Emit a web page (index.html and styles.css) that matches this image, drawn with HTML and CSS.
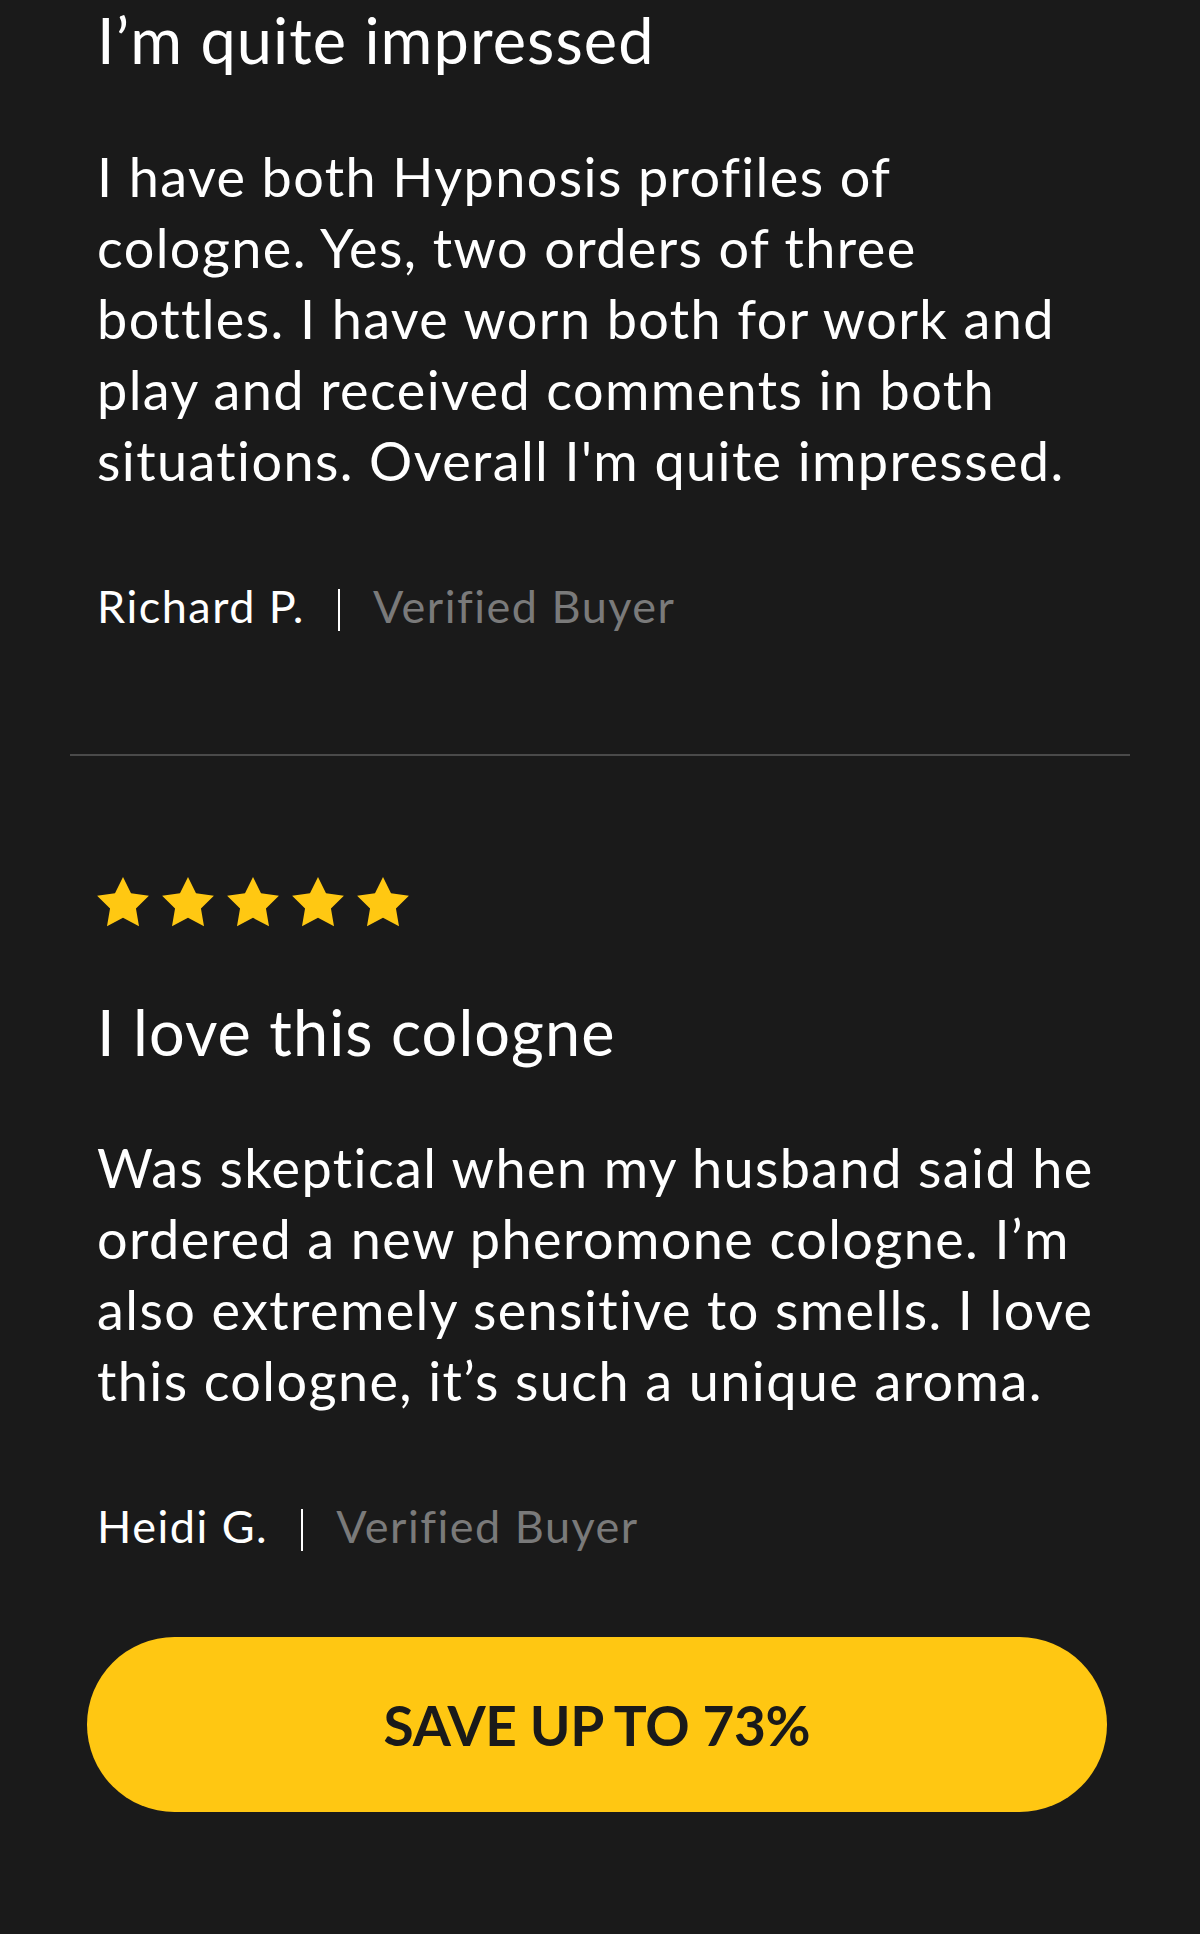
FILE: index.html
```html
<!DOCTYPE html>
<html>
<head>
    <title>Reviews</title>
    <link rel="stylesheet" href="styles.css">
</head>
<body>
    <div class="reviews">
        <div class="review">
            <h2 class="review-title">I’m quite impressed</h2>
            <p class="review-text">I have both Hypnosis profiles of<br>cologne. Yes, two orders of three<br>bottles. I have worn both for work and<br>play and received comments in both<br>situations. Overall I'm quite impressed.</p>
            <div class="review-author">
                <span class="author-name">Richard P.</span>
                <span class="author-sep"></span>
                <span class="author-badge">Verified Buyer</span>
            </div>
        </div>

        <div class="review review-bordered">
            <div class="stars">
                <svg viewBox="2 2 20 19.3"><path d="M12 2l3.09 6.26L22 9.27l-5 4.87 1.18 6.88L12 17.77l-6.18 3.25L7 14.14 2 9.27l6.91-1.01L12 2z"/></svg>
                <svg viewBox="2 2 20 19.3"><path d="M12 2l3.09 6.26L22 9.27l-5 4.87 1.18 6.88L12 17.77l-6.18 3.25L7 14.14 2 9.27l6.91-1.01L12 2z"/></svg>
                <svg viewBox="2 2 20 19.3"><path d="M12 2l3.09 6.26L22 9.27l-5 4.87 1.18 6.88L12 17.77l-6.18 3.25L7 14.14 2 9.27l6.91-1.01L12 2z"/></svg>
                <svg viewBox="2 2 20 19.3"><path d="M12 2l3.09 6.26L22 9.27l-5 4.87 1.18 6.88L12 17.77l-6.18 3.25L7 14.14 2 9.27l6.91-1.01L12 2z"/></svg>
                <svg viewBox="2 2 20 19.3"><path d="M12 2l3.09 6.26L22 9.27l-5 4.87 1.18 6.88L12 17.77l-6.18 3.25L7 14.14 2 9.27l6.91-1.01L12 2z"/></svg>
            </div>
            <h2 class="review-title">I love this cologne</h2>
            <p class="review-text">Was skeptical when my husband said he<br>ordered a new pheromone cologne. I’m<br>also extremely sensitive to smells. I love<br>this cologne, it’s such a unique aroma.</p>
            <div class="review-author">
                <span class="author-name">Heidi G.</span>
                <span class="author-sep"></span>
                <span class="author-badge">Verified Buyer</span>
            </div>
        </div>

        <a class="cta-button" href="#">SAVE UP TO 73%</a>
    </div>
</body>
</html>
```

FILE: styles.css
```css
body {
    margin: 0;
    background-color: #1a1a1a;
    color: #fff;
    font-family: Lato, "Open Sans", sans-serif;
}

.reviews {
    padding: 2px 70px 121px;
}

.review {
    padding: 0 27px 121px;
}

.review-bordered {
    border-top: 2px solid #4a4a4a;
    padding-top: 121px;
    padding-bottom: 0;
}

.review-title {
    margin: 0 0 63px;
    font-size: 63px;
    font-weight: 400;
    line-height: 76px;
    letter-spacing: 1.1px;
}

.review-bordered .review-title {
    margin-bottom: 62px;
}

.review-text {
    margin: 0 0 83px;
    font-size: 54px;
    line-height: 71px;
    letter-spacing: 1.4px;
}

.review-author {
    display: flex;
    align-items: center;
    font-size: 45px;
    line-height: 54px;
    letter-spacing: 1.5px;
}

.author-sep {
    width: 2px;
    height: 42px;
    margin: 8px 33px 0 33px;
    background-color: #fff;
}

.author-badge {
    color: #7a7a7a;
}

.stars {
    display: flex;
    gap: 13px;
    margin-bottom: 67px;
}

.stars svg {
    width: 52px;
    height: 50px;
    fill: #ffc812;
}

.cta-button {
    display: flex;
    align-items: center;
    justify-content: center;
    height: 175px;
    margin: 84px 23px 0 17px;
    border-radius: 88px;
    background-color: #ffc712;
    color: #1a1a1a;
    font-size: 55px;
    font-weight: 700;
    letter-spacing: -0.3px;
    text-decoration: none;
}
```
